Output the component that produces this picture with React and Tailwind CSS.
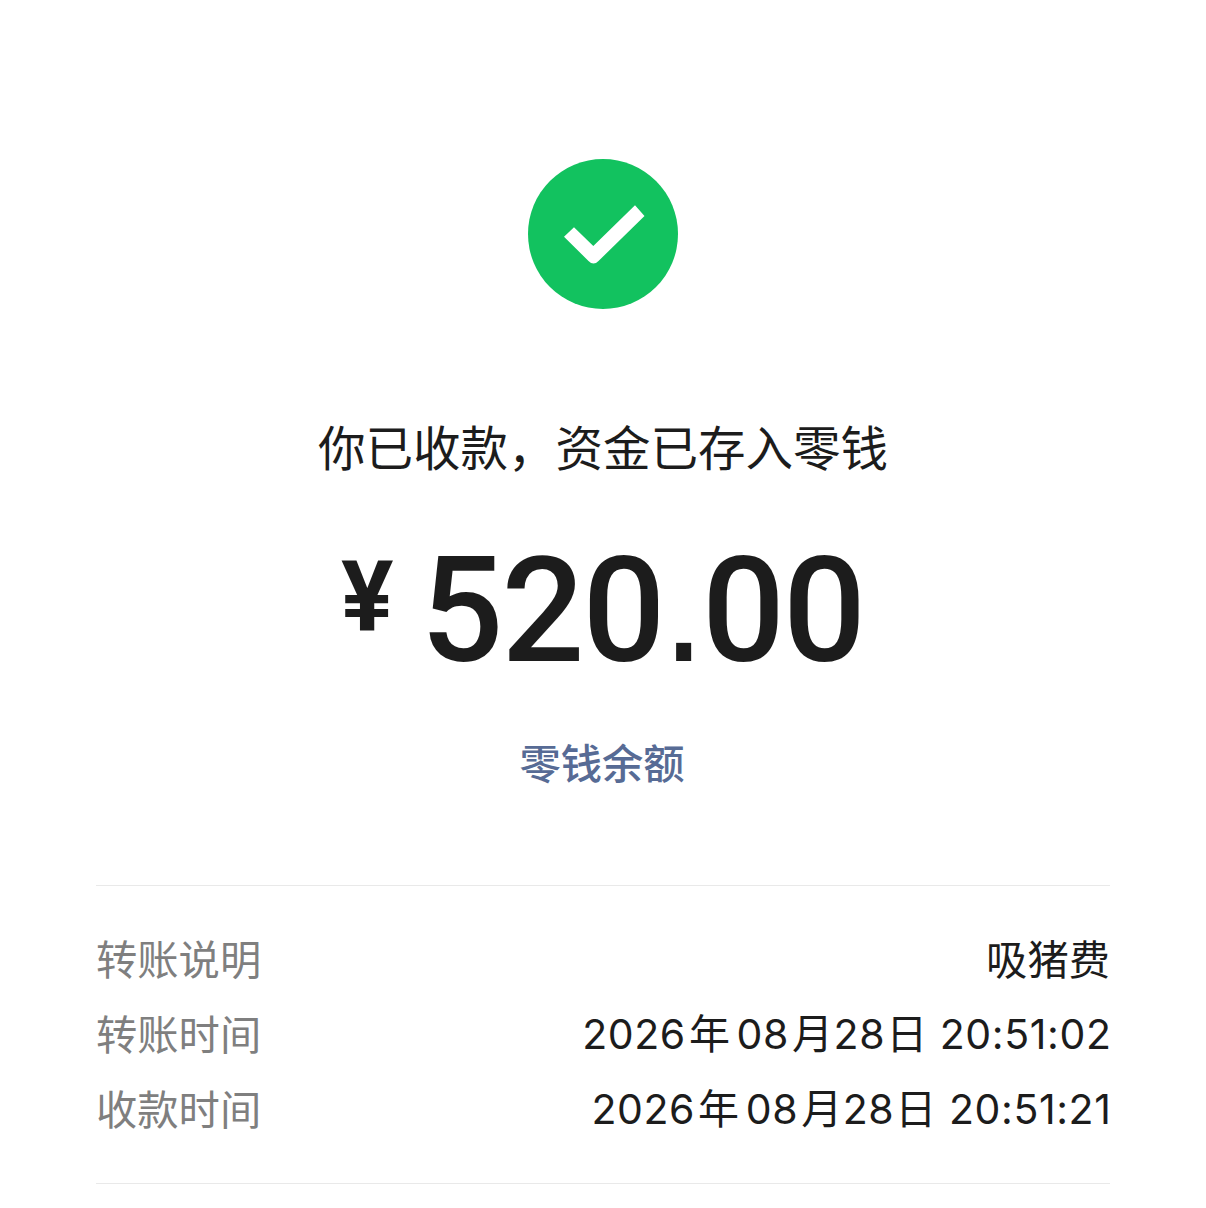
import React from 'react';

const cjk = '"Noto Sans CJK SC", sans-serif';

const rows = [
  { label: '转账说明', value: <span>吸猪费</span> },
  { label: '转账时间', value: <DateText time="20:51:02" /> },
  { label: '收款时间', value: <DateText time="20:51:21" /> },
];

function DateText({ time }) {
  return (
    <span className="pt-[5px] mr-[-1.5px] font-['Inter','Noto_Sans_CJK_SC',sans-serif] text-[41px] tracking-[0.6px]">
      2026<span className="ml-[3px] mr-[6px]">年</span>08<span className="ml-[3px]">月</span>28<span className="ml-[1px]">日</span>
      <span className="ml-[12px]">{time}</span>
    </span>
  );
}

const App = () => {
  return (
    <div className="w-[1206px] h-[1208px] bg-white overflow-hidden px-[96px] pt-[159px]" style={{ fontFamily: cjk }}>
      <div className="flex justify-center">
        <svg width="150" height="150" viewBox="0 0 150 150">
          <circle cx="75" cy="75" r="75" fill="#12c25f" />
          <path d="M36 77.7 L46 68.2 L65.3 87 L107 46.2 L116.5 57 L70.5 102 Q65.5 107 60.5 102 Z" fill="#fff" />
        </svg>
      </div>

      <div className="mt-[103px] text-center text-[47.5px] leading-[68px] text-[#1c1c1c]">你已收款，资金已存入零钱</div>

      <div className="mt-[58px] pr-[1px] flex justify-center items-center h-[146px] text-[#1c1c1c] font-['Roboto',sans-serif] font-medium">
        <span className="text-[98px] font-bold leading-none mb-[26px] mr-[27px]">¥</span>
        <span className="text-[146px] leading-none tracking-[-2px]">
          520<span className="mx-[-3px] font-['DejaVu_Sans',sans-serif] font-normal">.</span>00
        </span>
      </div>

      <div className="mt-[48px] pr-[2px] text-center text-[41.3px] leading-[58px] text-[#576b95] font-medium">零钱余额</div>

      <div className="mt-[95px] border-t border-b border-[#e9e9e9] pt-[34px] h-[299px]">
        {rows.map((row) => (
          <div key={row.label} className="flex justify-between items-center h-[75px] text-[41.3px] text-[#1c1c1c]">
            <span className="text-[#7f7f7f]">{row.label}</span>
            {row.value}
          </div>
        ))}
      </div>
    </div>
  );
};

export default App;
